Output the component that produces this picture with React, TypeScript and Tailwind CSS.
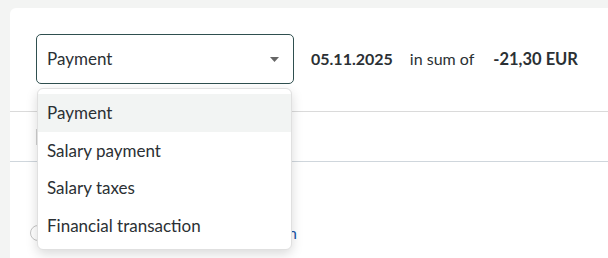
import { useState } from "react";

const Options = ["Payment", "Salary payment", "Salary taxes", "Financial transaction"];

export default function App() {
    const [value, setValue] = useState("Payment");

    return (
        <div className="h-[258px] w-[608px] overflow-hidden bg-[#f3f4f3] pl-[10px] pt-[8px] font-['Lato',sans-serif] text-[#2b3034]">
            <div className="relative h-[400px] w-[700px] rounded-tl-[6px] bg-white">
                {/* header row */}
                <div className="flex items-center px-[26px] pt-[26px]">
                    <div className="flex h-[50px] w-[258px] items-center justify-between rounded-[5px] border border-[#2f4f4f] pl-[10px] pr-[14px]">
                        <span className="text-[17px]">{value}</span>
                        <svg width="9" height="5" viewBox="0 0 9 5">
                            <path d="M0 0h9L4.5 5z" fill="#666" />
                        </svg>
                    </div>
                    <span className="ml-[17px] text-[16px] font-bold">05.11.2025</span>
                    <span className="ml-[17px] text-[16px]">in sum of</span>
                    <span className="ml-[19px] text-[16.5px] font-bold">-21,30 EUR</span>
                </div>

                <div className="mt-[27px] border-t border-[#dadada]" />
                <div className="flex h-[49px] items-center px-[26px]">
                    <div className="h-[16px] w-[100px] border-l border-[#d0d0d0]" />
                </div>
                <div className="border-t border-[#cfd6dc]" />

                <div className="mt-[59px] flex items-center gap-[8px] pl-[20px]">
                    <div className="h-[16px] w-[16px] rounded-full border border-[#c4c4c4]" />
                    <span className="w-[243px] whitespace-nowrap text-right text-[16px] text-[#1a56a8]">
                        Book as new financial transaction
                    </span>
                </div>

                {/* open menu */}
                <div className="absolute left-[27px] top-[80px] w-[255px] rounded-[6px] border border-[#e0e0e0] bg-white py-[5px] shadow-[0_4px_12px_rgba(0,0,0,0.15)]">
                    {Options.map((o) => (
                        <div
                            key={o}
                            onClick={() => setValue(o)}
                            className={`flex h-[37.5px] items-center px-[9px] text-[17px] ${o === value ? "bg-[#f2f4f3]" : ""}`}
                        >
                            {o}
                        </div>
                    ))}
                </div>
            </div>
        </div>
    );
}
